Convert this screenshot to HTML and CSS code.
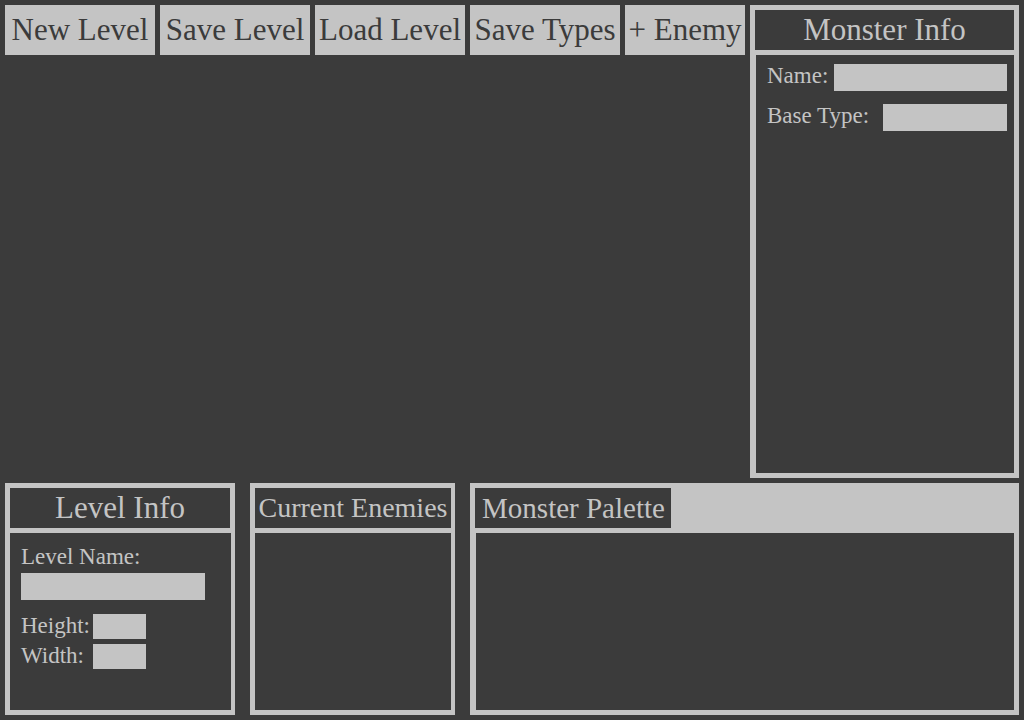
FILE: index.html
```html
<!DOCTYPE html>
<html lang="en">
<head>
<meta charset="utf-8">
<title>Level Editor</title>
<link rel="stylesheet" href="styles.css">
</head>
<body>
<div class="editor">
  <div class="upper">
    <main class="workspace">
      <nav class="toolbar">
        <button type="button" class="tool">New Level</button>
        <button type="button" class="tool">Save Level</button>
        <button type="button" class="tool">Load Level</button>
        <button type="button" class="tool">Save Types</button>
        <button type="button" class="tool tool-small">+ Enemy</button>
      </nav>
    </main>
    <section class="panel monster-info">
      <h2 class="panel-title">Monster Info</h2>
      <div class="panel-body inset monster-fields">
        <div class="field"><label for="name">Name:</label><input id="name" class="name-input" type="text"></div>
        <div class="field"><label for="base">Base Type:</label><input id="base" class="base-input" type="text"></div>
      </div>
    </section>
  </div>
  <div class="lower">
    <section class="panel thin-right level-info">
      <h2 class="panel-title title-short">Level Info</h2>
      <div class="panel-body level-fields">
        <label for="level-name">Level Name:</label>
        <input id="level-name" class="level-input" type="text">
        <div class="size-fields">
          <label for="height">Height:</label><input id="height" type="text">
          <label for="width">Width:</label><input id="width" type="text">
        </div>
      </div>
    </section>
    <section class="panel thin-right enemies">
      <h2 class="panel-title title-enemies">Current Enemies</h2>
      <div class="panel-body"></div>
    </section>
    <section class="panel palette">
      <h2 class="panel-title title-palette">Monster Palette</h2>
      <div class="panel-body inset"></div>
    </section>
  </div>
</div>
</body>
</html>
```
FILE: styles.css
```css
:root {
  --dark: #3b3b3b;
  --light: #c4c4c4;
}

* { box-sizing: border-box; }

body {
  margin: 0;
  background: var(--dark);
  color: var(--light);
  font-family: "Liberation Serif", "Times New Roman", serif;
}

.editor {
  display: flex;
  flex-direction: column;
  gap: 5px;
  min-height: 100vh;
  padding: 5px;
}

.upper {
  display: flex;
  flex: 1;
  gap: 5px;
}

.workspace { flex: 1; }

.toolbar {
  display: flex;
  gap: 5px;
}

.tool {
  flex: 5 1 0;
  height: 50px;
  padding: 0;
  border: 0;
  background: var(--light);
  color: var(--dark);
  font: 31px "Liberation Serif", "Times New Roman", serif;
  white-space: nowrap;
}

.tool-small { flex-grow: 4; }

.panel {
  display: flex;
  flex-direction: column;
  gap: 5px;
  padding: 5px;
  background: var(--light);
}

.thin-right { padding-right: 4px; }

.panel-title {
  margin: 0;
  background: var(--dark);
  font-size: 31px;
  font-weight: normal;
  line-height: 40px;
  text-align: center;
  white-space: nowrap;
}

.title-short { margin-right: 1px; }

.title-enemies { font-size: 28px; }

.title-palette {
  align-self: flex-start;
  padding: 0 5px 0 6px;
  font-size: 29px;
  min-width: 196px;
}

.panel-body {
  flex: 1;
  background: var(--dark);
  font-size: 23px;
  line-height: 24px;
}

.inset { margin-left: 1px; }

.monster-info {
  width: 269px;
  margin-right: 0;
}

.monster-fields {
  display: flex;
  flex-direction: column;
  gap: 13px;
  padding: 9px 7px 9px 11px;
}

.field {
  display: flex;
  justify-content: space-between;
}

input {
  min-width: 0;
  height: 27px;
  padding: 0 4px;
  border: 0;
  border-radius: 0;
  background: var(--light);
  color: var(--dark);
  font: 20px "Liberation Serif", "Times New Roman", serif;
}

.name-input { width: 173px; }

.base-input { width: 124px; }

.lower {
  display: flex;
  gap: 15px;
  min-height: 232px;
}

.level-info { width: 230px; }

.enemies { width: 205px; }

.palette { flex: 1; }

.level-fields {
  display: flex;
  flex-direction: column;
  padding: 12px 26px 12px 11px;
}

.level-input {
  width: 100%;
  margin: 4px 0 14px;
}

.size-fields {
  display: grid;
  grid-template-columns: 72px 53px;
  gap: 5px 0;
}

.size-fields input { height: 25px; }
```
